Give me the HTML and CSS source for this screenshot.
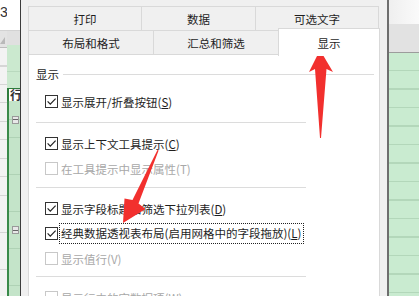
FILE: index.html
```html
<!DOCTYPE html>
<html lang="zh-CN">
<head>
<meta charset="utf-8">
<title>数据透视表选项 - 显示</title>
<link rel="stylesheet" href="styles.css">
</head>
<body>
<div class="screen">
  <div class="sheet-left">
    <div class="col-a">
      <div class="a-top">3</div>
      <div class="a-head"><span class="corner"></span></div>
      <div class="a-rows"></div>
    </div>
    <div class="col-b">
      <div class="b-top"></div>
      <div class="b-head"></div>
      <div class="b-green"></div>
      <div class="b-cell">行</div>
      <div class="b-rows">
        <span class="minus m1"></span>
        <span class="minus m2"></span>
      </div>
    </div>
  </div>

  <div class="dialog">
    <div class="tabrow back">
      <div class="tab w1">打印</div>
      <div class="tab w2">数据</div>
      <div class="tab w3">可选文字</div>
    </div>
    <div class="tabrow front">
      <div class="tab w4">布局和格式</div>
      <div class="tab w5">汇总和筛选</div>
      <div class="tab w6 sel">显示</div>
    </div>
    <div class="panel">
      <div class="group"><span>显示</span><span class="gline"></span></div>

      <div class="opt first"><span class="box"><svg width="11" height="11" viewBox="0 0 11 11"><path d="M1.6 5.4 L4.3 8.1 L9.6 2.6" fill="none" stroke="#222" stroke-width="1.2"/></svg></span><span>显示展开/折叠按钮(<u>S</u>)</span></div>
      <div class="sep s1"></div>
      <div class="opt"><span class="box"><svg width="11" height="11" viewBox="0 0 11 11"><path d="M1.6 5.4 L4.3 8.1 L9.6 2.6" fill="none" stroke="#222" stroke-width="1.2"/></svg></span><span>显示上下文工具提示(<u>C</u>)</span></div>
      <div class="opt off"><span class="box"></span><span>在工具提示中显示属性(T)</span></div>
      <div class="sep s2"></div>
      <div class="opt"><span class="box"><svg width="11" height="11" viewBox="0 0 11 11"><path d="M1.6 5.4 L4.3 8.1 L9.6 2.6" fill="none" stroke="#222" stroke-width="1.2"/></svg></span><span>显示字段标题和筛选下拉列表(<u>D</u>)</span></div>
      <div class="opt"><span class="box"><svg width="11" height="11" viewBox="0 0 11 11"><path d="M1.6 5.4 L4.3 8.1 L9.6 2.6" fill="none" stroke="#222" stroke-width="1.2"/></svg></span><span class="focus">经典数据透视表布局(启用网格中的字段拖放)(<u>L</u>)</span></div>
      <div class="opt off"><span class="box"></span><span>显示值行(V)</span></div>
      <div class="sep s3"></div>
      <div class="opt off"><span class="box"></span><span>显示行中的空数据项(W)</span></div>
    </div>
  </div>

  <div class="sheet-right">
    <div class="r-top"></div>
    <div class="r-head"></div>
    <div class="r-rows"></div>
  </div>

  <svg class="arrows" width="419" height="296" viewBox="0 0 419 296">
    <polygon fill="#f2302e" points="320,50 333,72 326.5,69 321,138 320,138 315,69 309,72"/>
    <polygon fill="#f2302e" points="123,223 145.5,209 138.5,203.5 158.6,150.4 157.6,149.8 132.5,200 124.5,198.5"/>
  </svg>
</div>
</body>
</html>
```

FILE: styles.css
```css
* { box-sizing: border-box; }
html, body { margin: 0; padding: 0; }
body {
  width: 419px;
  height: 296px;
  overflow: hidden;
  background: #f0f0f0;
  font-family: "Noto Sans CJK SC", "Noto Sans", sans-serif;
}
.screen {
  position: relative;
  display: flex;
  width: 419px;
  height: 296px;
  overflow: hidden;
}

/* left spreadsheet fragment */
.sheet-left { width: 20px; flex: none; display: flex; }
.col-a { width: 7px; display: flex; flex-direction: column; }
.a-top {
  height: 30px;
  background: #fff;
  padding-top: 5px;
  font: 14px/15px "Liberation Sans", sans-serif;
  color: #333;
  white-space: nowrap;
}
.a-head {
  height: 17px;
  background: #e3e3e3;
  border-top: 1px solid #d2d2d2;
}
.corner {
  display: block;
  width: 0; height: 0;
  margin-top: 6px;
  border-left: 5px solid transparent;
  border-bottom: 7px solid #b9b9b9;
}
.a-rows {
  flex: 1;
  border-top: 1px solid #bdbdbd;
  background: repeating-linear-gradient(to bottom, #f3f3f3 0, #f3f3f3 17.5px, #d6d6d6 17.5px, #d6d6d6 18.5px);
}
.col-b { width: 13px; display: flex; flex-direction: column; }
.b-top { height: 30px; background: #fff; }
.b-head { height: 15px; background: #e0e0e0; border-top: 1px solid #d2d2d2; }
.b-green {
  height: 43px;
  background: linear-gradient(to bottom, #cbe9cf 0, #cbe9cf 26px, #b9d9be 26px, #b9d9be 27px, #cbe9cf 27px);
}
.b-cell {
  height: 13px;
  background: #fff;
  border-top: 1px solid #2f7d3e;
  border-left: 2px solid #2f7d3e;
  padding-left: 1px;
  font-size: 12px;
  line-height: 12px;
  font-weight: bold;
  color: #333;
  overflow: hidden;
  white-space: nowrap;
}
.b-rows {
  flex: 1;
  display: flex;
  flex-direction: column;
  border-left: 2px solid #3a8a4a;
  background: repeating-linear-gradient(to bottom, #c4e4c9 0, #c4e4c9 17.5px, #afd2b5 17.5px, #afd2b5 18.5px);
}
.minus {
  display: block;
  width: 7px;
  height: 8px;
  margin-left: 3px;
  border: 1px solid #9a9a9a;
  background: linear-gradient(to bottom, #e8e8e8 0, #e8e8e8 2.5px, #666 2.5px, #666 3.5px, #e8e8e8 3.5px);
}
.m1 { margin-top: 15px; }
.m2 { margin-top: 102px; }

/* dialog */
.dialog {
  width: 369px;
  flex: none;
  height: 296px;
  background: #f0f0f0;
  border-left: 1px solid #3c3c3c;
  border-right: 2px solid #6e6e6e;
  padding: 6px 0 0 7px;
  display: flex;
  flex-direction: column;
}
.tabrow { display: flex; height: 25px; flex: none; }
.tabrow.front { margin-top: -1px; align-items: flex-end; }
.tab {
  height: 25px;
  border: 1px solid #d9d9d9;
  background: #f0f0f0;
  display: flex;
  align-items: center;
  justify-content: center;
  font-size: 11.5px;
  color: #1e1e1e;
  white-space: nowrap;
}
.tab + .tab { margin-left: -1px; }
.w1 { width: 114px; }
.w2 { width: 115px; }
.w3 { width: 124px; }
.w4 { width: 126px; }
.w5 { width: 126px; }
.w6 { width: 102px; }
.tab.sel {
  height: 28px;
  margin-bottom: -1px;
  padding-top: 1px;
  background: #fff;
  border-bottom: none;
  position: relative;
  z-index: 1;
}

.panel {
  width: 352px;
  flex: 1;
  margin-top: -1px;
  background: #fff;
  border: 1px solid #d9d9d9;
  border-bottom: none;
  padding-top: 11px;
  color: #1e1e1e;
  font-size: 11.5px;
}
.group {
  display: flex;
  align-items: center;
  gap: 4px;
  height: 16px;
  padding-left: 7px;
  margin-right: 5px;
}
.gline { flex: 1; height: 1px; background: #dcdcdc; }

.opt {
  display: flex;
  align-items: center;
  gap: 3px;
  height: 25px;
  padding-left: 16px;
  white-space: nowrap;
}
.opt.first { margin-top: 7px; }
.box {
  width: 13px;
  height: 13px;
  flex: none;
  border: 1px solid #333;
  background: #fff;
  display: flex;
  align-items: center;
  justify-content: center;
}
.opt.off { color: #a8a8a8; }
.opt.off .box { border-color: #c8c8c8; }
.focus {
  border: 1px dotted #222;
  margin-left: -2px;
  padding: 1px 2px 1px 1px;
  line-height: 17px;
}
u { text-underline-offset: 1px; }

.sep { height: 1px; width: 270px; margin-left: 7px; background: #dcdcdc; flex: none; }
.s1 { margin-top: 8px; margin-bottom: 8px; }
.s2 { margin-top: 6px; margin-bottom: 8px; }
.s3 { margin-top: 5px; margin-bottom: 8px; }

/* right spreadsheet fragment */
.sheet-right { width: 30px; flex: none; display: flex; flex-direction: column; }
.r-top { height: 24px; background: linear-gradient(to right, #efefef, #fafafa); }
.r-head { height: 29px; background: #e2e2e2; border-bottom: 1px solid #9c9c9c; }
.r-rows {
  flex: 1;
  background: repeating-linear-gradient(to bottom, #c9ebd0 0, #c9ebd0 17px, #b3d7ba 17px, #b3d7ba 18.5px);
}

/* annotation arrows drawn over the screenshot */
.arrows { position: absolute; left: 0; top: 0; pointer-events: none; }
```
